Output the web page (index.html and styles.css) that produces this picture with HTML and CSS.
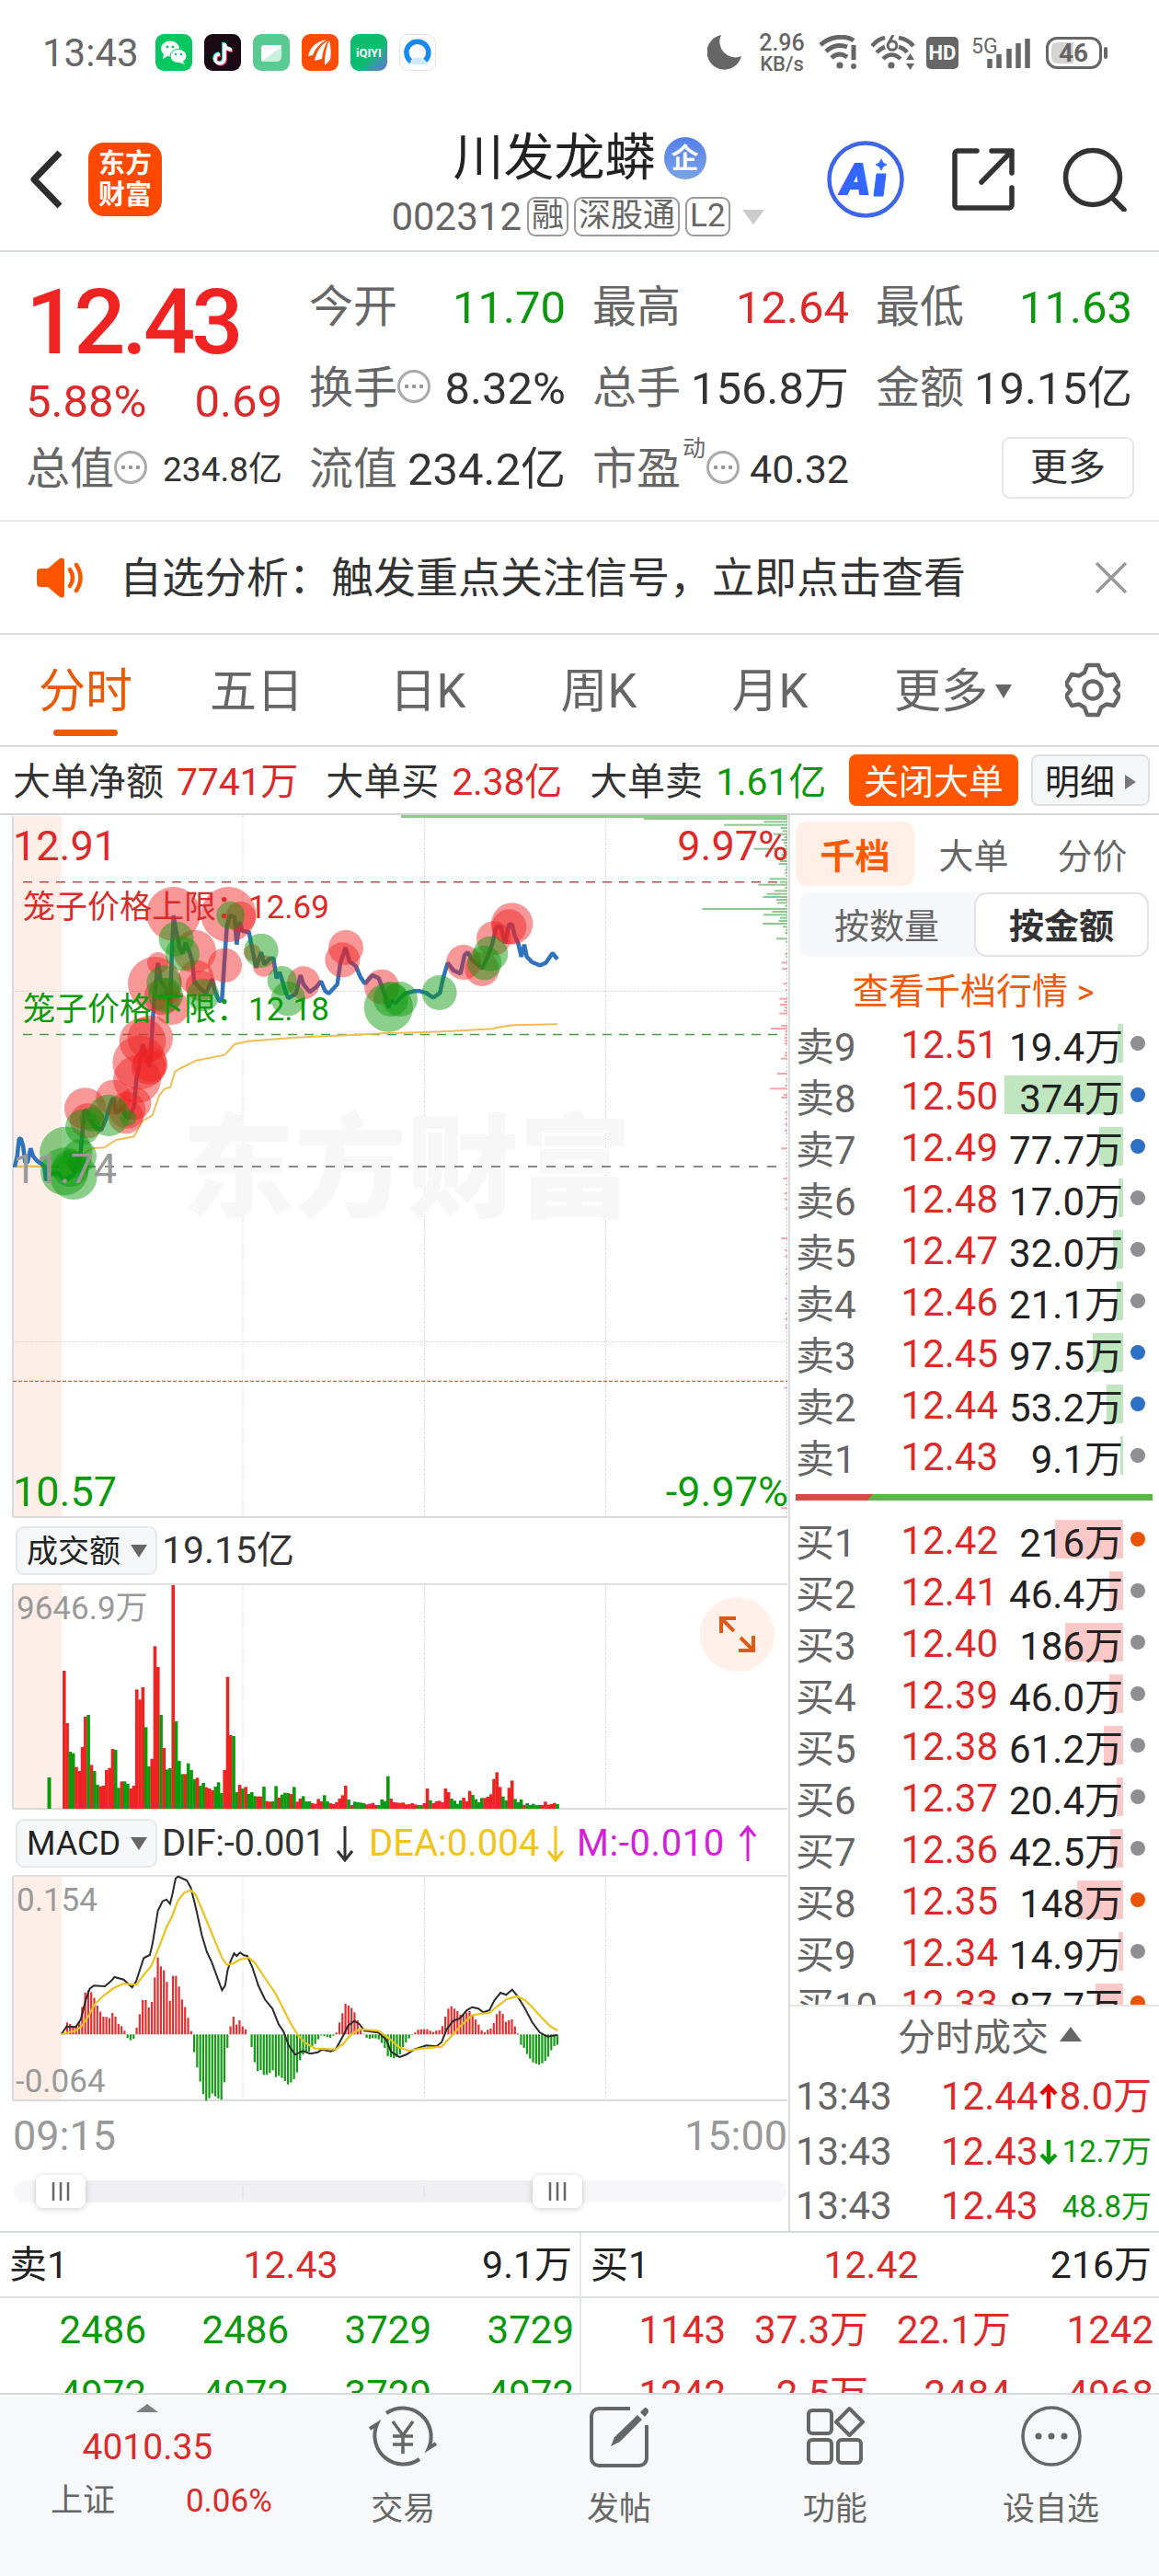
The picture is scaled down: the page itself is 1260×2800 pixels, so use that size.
FILE: index.html
```html
<!DOCTYPE html>
<html lang="zh-CN">
<head>
    <meta charset="UTF-8">
    <title>川发龙蟒 002312</title>
    <link rel="stylesheet" href="styles.css">
</head>
<body>
    <div class="status-bar">
        <span class="clock">13:43</span>
        <div class="app-icons">
            <svg width="40" height="40" viewBox="0 0 40 40"><rect width="40" height="40" rx="9" fill="#07c860"/><ellipse cx="16" cy="16" rx="10" ry="8.500" fill="#fff"/><path d="M9 22l-1 5 5-3z" fill="#fff"/><ellipse cx="25" cy="24" rx="9" ry="7.500" fill="#fff" stroke="#07c860"/><path d="M29 29l3 4-6-2z" fill="#fff"/><g fill="#07c860"><circle cx="13" cy="14" r="1.400"/><circle cx="19" cy="14" r="1.400"/><circle cx="22" cy="22" r="1.200"/><circle cx="28" cy="22" r="1.200"/></g></svg>
            <svg width="40" height="40" viewBox="0 0 40 40"><rect width="40" height="40" rx="9" fill="#1a0a14"/><g fill="none" stroke-width="3.600"><path d="M21 9v17a5 5 0 1 1-5-5M21 10c1 4 4 6 8 6" stroke="#25f4ee"/><path d="M23 11v17a5 5 0 1 1-5-5M23 12c1 4 4 6 8 6" stroke="#fe2c55"/><path d="M22 10v17a5 5 0 1 1-5-5M22 11c1 4 4 6 8 6" stroke="#fff"/></g></svg>
            <svg width="40" height="40" viewBox="0 0 40 40"><rect width="40" height="40" rx="9" fill="#59cb92"/><path d="M13 12h16a2 2 0 0 1 2 2v11a5 5 0 0 1-5 5H11a2 2 0 0 1-2-2V16a4 4 0 0 1 4-4z" fill="#c9f2dd"/><path d="M13 12h16a2 2 0 0 1 2 2L10 29a2 2 0 0 1-1-2V16a4 4 0 0 1 4-4z" fill="#fff"/></svg>
            <svg width="40" height="40" viewBox="0 0 40 40"><rect width="40" height="40" rx="9" fill="#ff4c00"/><path d="M7 24C9 14 16 8 27 6c-8 5-12 10-15 17zM14 29C16 19 21 11 29 7c-5 7-6 13-7 20zM25 34c0-10 1-18 5-27 2 8 2 15 1 21z" fill="#fff"/></svg>
            <svg width="40" height="40" viewBox="0 0 40 40"><defs><linearGradient id="iq" x1="0" y1="0" x2="1" y2="1"><stop offset=".55" stop-color="#0dbd6d"/><stop offset="1" stop-color="#6b6fe0"/></linearGradient></defs><rect width="40" height="40" rx="9" fill="url(#iq)"/><text x="20" y="25" class="iq-text">iQIYI</text></svg>
            <svg width="40" height="40" viewBox="0 0 40 40"><rect x=".5" y=".5" width="39" height="39" rx="9" fill="#fdfdfd" stroke="#e6e6e6"/><path d="M13 30a12 12 0 1 1 15-1" fill="none" stroke="#1689f2" stroke-width="5.500"/><path d="M12 29c4-4 10-5 16-1l3 5H15z" fill="#cdeaff"/></svg>
        </div>
        <svg class="moon" width="38" height="38" viewBox="0 0 38 38"><path d="M15 0A19 19 0 1 0 37 23 17 17 0 0 1 15 0z" fill="#666"/></svg>
        <div class="speed"><span>2.96</span><small>KB/s</small></div>
        <svg class="wifi" width="42" height="38" viewBox="0 0 42 38"><g fill="none" stroke="#666" stroke-width="5"><path d="M1 11C11 1 28 0 37 6"/><path d="M7 18C14 11 23 10 30 13"/><path d="M13 25c5-5 11-5 17-1"/></g><circle cx="22" cy="33" r="3.600" fill="#666"/><path d="M37 11v16" stroke="#666" stroke-width="5"/><circle cx="37" cy="34" r="3" fill="#666"/></svg>
        <svg class="wifi2" width="48" height="38" viewBox="0 0 48 38"><g fill="none" stroke="#666" stroke-width="4.500"><path d="M1 12C5 7 10 4 15 3M30 3c6 1 12 4 16 9"/><path d="M6 19c3-3 6-5 9-6M30 13c4 1 7 3 9 6"/><path d="M13 26c6-6 13-6 19 0"/><path d="M24 0l-5 9" stroke-width="3"/><circle cx="23" cy="11.500" r="4.800" stroke-width="3"/></g><circle cx="22" cy="33" r="3.600" fill="#666"/><path d="M38 27l4.500-7 4.500 7zM38 31l4.500 7 4.500-7z" fill="#666"/></svg>
        <span class="hd">HD</span>
        <div class="signal"><span>5G</span>
            <svg width="48" height="36" viewBox="0 0 48 36"><path d="M3 25v10M13 20v15M24 14v21M34 8v27M44 3v32" stroke="#666" stroke-width="5.500"/></svg>
        </div>
        <div class="battery"><span>46</span></div>
    </div>

    <header class="stock-header">
        <div class="header-left">
            <svg width="36" height="64" viewBox="0 0 36 64"><path d="M33 3L5 32l28 29" fill="none" stroke="#2d2d2d" stroke-width="7" stroke-linejoin="round"/></svg>
            <div class="brand"><span>东方</span><span>财富</span></div>
        </div>
        <div class="stock-title">
            <div class="name"><h1>川发龙蟒</h1><span class="corp">企</span></div>
            <div class="code"><span>002312</span><i>融</i><i>深股通</i><i>L2</i><b class="tri-down"></b></div>
        </div>
        <div class="header-right">
            <svg width="84" height="84" viewBox="0 0 84 84"><circle cx="42" cy="42" r="39.500" fill="none" stroke="#3f66e8" stroke-width="4.500"/><text x="31" y="58" class="ai-text">A</text><path d="M54 36h10l-3 24H51z" fill="#3366ff" stroke="#3366ff" stroke-linejoin="round"/><path d="M59 20q1 5 6 6-5 1-6 6-1-5-6-6 5-1 6-6z" fill="#3366ff" stroke="#3366ff"/></svg>
            <svg width="68" height="68" viewBox="0 0 68 68"><path d="M27 3H6a3 3 0 0 0-3 3v56a3 3 0 0 0 3 3h56a3 3 0 0 0 3-3V43M43 3h22v24M65 3L32 37" fill="none" stroke="#333" stroke-width="5.500" stroke-linecap="round" stroke-linejoin="round"/></svg>
            <svg width="70" height="70" viewBox="0 0 70 70"><circle cx="33" cy="33" r="29.500" fill="none" stroke="#333" stroke-width="5.500"/><path d="M54 55l13 13" stroke="#333" stroke-width="5.500" stroke-linecap="round"/></svg>
        </div>
    </header>

    <section class="quote">
        <div class="price"><strong>12.43</strong><p><span>5.88%</span><span>0.69</span></p></div>
        <div class="cell"><label>今开</label><span class="green">11.70</span></div>
        <div class="cell"><label>最高</label><span class="red">12.64</span></div>
        <div class="cell"><label>最低</label><span class="green">11.63</span></div>
        <div class="cell"><label>换手</label><i class="dots"></i><span>8.32%</span></div>
        <div class="cell"><label>总手</label><span>156.8万</span></div>
        <div class="cell"><label>金额</label><span>19.15亿</span></div>
        <div class="cell"><label>总值</label><i class="dots"></i><span class="small">234.8亿</span></div>
        <div class="cell"><label>流值</label><span>234.2亿</span></div>
        <div class="cell"><label>市盈</label><sup>动</sup><i class="dots"></i><span class="mid">40.32</span></div>
        <div class="cell"><button class="more">更多</button></div>
    </section>

    <section class="notice">
        <svg width="52" height="44" viewBox="0 0 52 44"><path d="M0 16a4 4 0 0 1 4-4h8L25 1q5-2 5 3v36q0 5-5 3L12 32H4a4 4 0 0 1-4-4z" fill="#ff5500"/><path d="M36 13q6 9 0 18M43 8q9 14 0 28" fill="none" stroke="#ff5500" stroke-width="4.500" stroke-linecap="round"/></svg>
        <p>自选分析：触发重点关注信号，立即点击查看</p>
        <svg width="34" height="34" viewBox="0 0 34 34"><path d="M1 1l32 32M33 1L1 33" stroke="#999" stroke-width="3.500"/></svg>
    </section>

    <nav class="tabs">
        <a class="active">分时</a>
        <a>五日</a>
        <a>日K</a>
        <a>周K</a>
        <a>月K</a>
        <a class="tab-more">更多<b></b></a>
        <svg width="60" height="60" viewBox="0 0 60 60"><path d="M24 3h12l3 8 6 3.500 8-1.500 6 10.500-5 6.500 5 6.500L53 47l-8-1.500-6 3.500-3 8H24l-3-8-6-3.500L7 47 1 36.500 6 30l-5-6.500L7 13l8 1.500 6-3.500z" fill="none" stroke="#666" stroke-width="4.500" stroke-linejoin="round"/><circle cx="30" cy="30" r="9.500" fill="none" stroke="#666" stroke-width="4.500"/></svg>
    </nav>

    <section class="big-orders">
        <span>大单净额</span><span class="red">7741万</span>
        <span>大单买</span><span class="red">2.38亿</span>
        <span>大单卖</span><span class="green">1.61亿</span>
        <button class="btn-close">关闭大单</button>
        <button class="btn-detail">明细<b></b></button>
    </section>

    <main class="main">
        <div class="charts">
            <svg id="priceChart" width="857" height="765" viewBox="0 886 857 765"></svg>
            <div class="indicator">
                <span class="picker">成交额<b></b></span><span>19.15亿</span>
            </div>
            <svg id="volumeChart" width="857" height="250" viewBox="0 1720 857 250"></svg>
            <div class="indicator macd">
                <span class="picker">MACD<b></b></span>
                <span class="dif">DIF:-0.001</span><svg width="18" height="40" viewBox="0 0 18 40"><path d="M9 1v37M1 28l8 10 8-10" fill="none" stroke="#333" stroke-width="3"/></svg>
                <span class="dea">DEA:0.004</span><svg width="18" height="40" viewBox="0 0 18 40"><path d="M9 1v37M1 28l8 10 8-10" fill="none" stroke="#f0c419" stroke-width="3"/></svg>
                <span class="m">M:-0.010</span><svg width="18" height="40" viewBox="0 0 18 40"><path d="M9 39V2M1 12L9 2l8 10" fill="none" stroke="#d31fdb" stroke-width="3"/></svg>
            </div>
            <svg id="macdChart" width="857" height="250" viewBox="0 2037 857 250"></svg>
            <div class="times"><span>09:15</span><span>15:00</span></div>
            <div class="slider">
                <svg width="857" height="60" viewBox="0 2352 857 60">
                    <rect x="15" y="2370" width="840" height="24" rx="12" fill="#f7f7f9"/>
                    <rect x="66" y="2370" width="540" height="24" fill="#f0f0f2"/>
                    <path d="M264 2375v14M461 2375v14" stroke="#dcdcde"/>
                    <g fill="#fff" class="handle">
                        <rect x="39" y="2364" width="54" height="36" rx="8"/>
                        <rect x="579" y="2364" width="54" height="36" rx="8"/>
                    </g>
                    <path d="M58 2372v20M66 2372v20M74 2372v20M598 2372v20M606 2372v20M614 2372v20" stroke="#666" stroke-width="2.500"/>
                </svg>
            </div>
        </div>

        <aside class="book">
            <div class="book-tabs"><a class="active">千档</a><a>大单</a><a>分价</a></div>
            <div class="segment"><a>按数量</a><a class="active">按金额</a></div>
            <a class="link">查看千档行情 <small>&gt;</small></a>
            <div class="levels sell">
                <div class="level"><em>卖9</em><b>12.51</b><span>19.4万</span><i style="width: 6px"></i><u></u></div>
                <div class="level"><em>卖8</em><b>12.50</b><span>374万</span><i style="width: 129px"></i><u class="blue"></u></div>
                <div class="level"><em>卖7</em><b>12.49</b><span>77.7万</span><i style="width: 26px"></i><u class="blue"></u></div>
                <div class="level"><em>卖6</em><b>12.48</b><span>17.0万</span><i style="width: 5px"></i><u></u></div>
                <div class="level"><em>卖5</em><b>12.47</b><span>32.0万</span><i style="width: 11px"></i><u></u></div>
                <div class="level"><em>卖4</em><b>12.46</b><span>21.1万</span><i style="width: 7px"></i><u></u></div>
                <div class="level"><em>卖3</em><b>12.45</b><span>97.5万</span><i style="width: 33px"></i><u class="blue"></u></div>
                <div class="level"><em>卖2</em><b>12.44</b><span>53.2万</span><i style="width: 18px"></i><u class="blue"></u></div>
                <div class="level"><em>卖1</em><b>12.43</b><span>9.1万</span><i style="width: 3px"></i><u></u></div>
            </div>
            <div class="ratio"></div>
            <div class="levels buy">
                <div class="level"><em>买1</em><b>12.42</b><span>216万</span><i style="width: 74px"></i><u class="orange"></u></div>
                <div class="level"><em>买2</em><b>12.41</b><span>46.4万</span><i style="width: 15px"></i><u></u></div>
                <div class="level"><em>买3</em><b>12.40</b><span>186万</span><i style="width: 63px"></i><u></u></div>
                <div class="level"><em>买4</em><b>12.39</b><span>46.0万</span><i style="width: 15px"></i><u></u></div>
                <div class="level"><em>买5</em><b>12.38</b><span>61.2万</span><i style="width: 21px"></i><u></u></div>
                <div class="level"><em>买6</em><b>12.37</b><span>20.4万</span><i style="width: 7px"></i><u></u></div>
                <div class="level"><em>买7</em><b>12.36</b><span>42.5万</span><i style="width: 14px"></i><u></u></div>
                <div class="level"><em>买8</em><b>12.35</b><span>148万</span><i style="width: 50px"></i><u class="orange"></u></div>
                <div class="level"><em>买9</em><b>12.34</b><span>14.9万</span><i style="width: 5px"></i><u></u></div>
                <div class="level"><em>买10</em><b>12.33</b><span>87.7万</span><i style="width: 30px"></i><u class="orange"></u></div>
            </div>
            <div class="ticks">
                <h3>分时成交<b></b></h3>
                <div class="tick"><em>13:43</em><span class="red">12.44</span><svg width="20" height="28" viewBox="0 0 20 28"><path d="M10 27V3M2 11l8-8 8 8" fill="none" stroke="#e60000" stroke-width="4.500"/></svg><span class="red amount">8.0万</span></div>
                <div class="tick"><em>13:43</em><span class="red">12.43</span><svg width="20" height="28" viewBox="0 0 20 28"><path d="M10 1v24M2 17l8 8 8-8" fill="none" stroke="#0a9a0a" stroke-width="4.500"/></svg><span class="green amount small">12.7万</span></div>
                <div class="tick"><em>13:43</em><span class="red">12.43</span><span class="green amount small">48.8万</span></div>
            </div>
        </aside>
    </main>

    <section class="queues">
        <div class="queue">
            <div class="queue-head"><span>卖1</span><span class="red">12.43</span><span>9.1万</span></div>
            <div class="queue-list green">
                <span>2486</span><span>2486</span><span>3729</span><span>3729</span>
                <span>4972</span><span>4972</span><span>3729</span><span>4972</span>
            </div>
        </div>
        <div class="queue">
            <div class="queue-head"><span>买1</span><span class="red">12.42</span><span>216万</span></div>
            <div class="queue-list red">
                <span>1143</span><span>37.3万</span><span>22.1万</span><span>1242</span>
                <span>1242</span><span>2.5万</span><span>2484</span><span>4968</span>
            </div>
        </div>
    </section>

    <footer class="bottom-nav">
        <div class="index">
            <b></b>
            <strong>4010.35</strong>
            <p><span>上证</span><span class="red">0.06%</span></p>
        </div>
        <a>
            <svg width="78" height="68" viewBox="0 0 78 68"><g fill="none" stroke="#666" stroke-width="4"><path d="M21 9a31 31 0 0 1 46 38l8-5"/><path d="M57 59A31 31 0 0 1 11 21l-8 5"/><path d="M28 18l11 15 11-15M39 33v20M28 34h22M28 43h22" stroke-width="3.500"/></g></svg>
            交易
        </a>
        <a>
            <svg width="68" height="68" viewBox="0 0 68 68"><path d="M46 4H12a8 8 0 0 0-8 8v46a8 8 0 0 0 8 8h44a8 8 0 0 0 8-8V22" fill="none" stroke="#666" stroke-width="4"/><path d="M25 45l4-10L54 11l5 5-24 24zM57 8l5-5q4 0 4 5l-4 5z" fill="#666"/></svg>
            发帖
        </a>
        <a>
            <svg width="64" height="68" viewBox="0 0 64 68"><g fill="none" stroke="#666" stroke-width="4" stroke-linejoin="round"><rect x="3" y="6" width="25" height="25" rx="4"/><rect x="3" y="38" width="25" height="25" rx="4"/><rect x="35" y="38" width="25" height="25" rx="4"/><path d="M47.500 4L62 18.500 47.500 33 33 18.500z"/></g></svg>
            功能
        </a>
        <a>
            <svg width="68" height="68" viewBox="0 0 68 68"><circle cx="34" cy="34" r="31" fill="none" stroke="#666" stroke-width="3.500"/><g fill="#666"><circle cx="20" cy="34" r="3.500"/><circle cx="34" cy="34" r="3.500"/><circle cx="48" cy="34" r="3.500"/></g></svg>
            设自选
        </a>
    </footer>
    <script src="charts.js"></script>
</body>
</html>
```
FILE: styles.css
```css
* {
    box-sizing: border-box;
}

body {
    margin: 0;
    width: 1260px;
    height: 2800px;
    overflow: hidden;
    background: #fff;
    color: #333;
    font-family: Roboto, "Noto Sans CJK SC", sans-serif;
    font-size: 41px;
    line-height: 1;
}

h1, h3, p {
    margin: 0;
    font-weight: normal;
}

i, em {
    font-style: normal;
}

svg {
    display: block;
    flex: none;
}

span, a, label, em {
    white-space: nowrap;
}

button {
    font-family: inherit;
    padding: 0;
}

.red {
    color: #dc2a2a;
}

.green {
    color: #0c980c;
}

/* status bar */
.status-bar {
    display: flex;
    align-items: center;
    height: 114px;
    padding-left: 46px;
    color: #666;
}

.clock {
    width: 123px;
    padding-top: 2px;
    font-size: 42px;
}

.app-icons {
    display: flex;
    gap: 13px;
}

.iq-text {
    font: bold 13px Roboto, sans-serif;
    fill: #fff;
    text-anchor: middle;
}

.moon {
    margin-left: 295px;
}

.speed {
    display: flex;
    flex-direction: column;
    align-items: center;
    width: 52px;
    margin-left: 17px;
    font-size: 25px;
    font-weight: 500;
}

.speed small {
    font-size: 22px;
}

.wifi {
    margin-left: 15px;
}

.wifi2 {
    margin-left: 14px;
}

.hd {
    width: 35px;
    height: 35px;
    margin-left: 12px;
    border-radius: 5px;
    background: #666;
    color: #fff;
    font-size: 22px;
    font-weight: bold;
    line-height: 36px;
    text-align: center;
}

.signal {
    display: flex;
    align-items: flex-start;
    margin-left: 14px;
    font-size: 23px;
}

.signal svg {
    margin-left: -12px;
}

.battery {
    position: relative;
    width: 61px;
    height: 35px;
    margin-left: 16px;
    border: 3px solid #666;
    border-radius: 12px;
    background: linear-gradient(90deg, #d4d4d4 24px, #fff 24px) content-box;
    padding: 3px;
    font-size: 28px;
    font-weight: bold;
    line-height: 24px;
    text-align: center;
}

.battery::after {
    content: "";
    position: absolute;
    right: -9px;
    top: 8px;
    width: 4px;
    height: 13px;
    border-radius: 2px;
    background: #666;
}

/* header */
.stock-header {
    display: grid;
    grid-template-columns: 1fr auto 1fr;
    height: 160px;
    border-bottom: 2px solid #d5dada;
}

.header-left {
    display: flex;
    align-items: center;
    gap: 28px;
    padding: 4px 0 0 32px;
}

.brand {
    display: flex;
    flex-direction: column;
    justify-content: center;
    gap: 5px;
    width: 80px;
    height: 80px;
    border-radius: 17px;
    background: #ff4800;
    color: #fff;
    font-size: 29px;
    font-weight: bold;
    text-align: center;
}

.stock-title {
    display: flex;
    flex-direction: column;
    align-items: center;
    padding-top: 30px;
}

.name {
    display: flex;
    align-items: center;
    gap: 9px;
}

.name h1 {
    font-size: 55px;
    color: #222;
}

.corp {
    width: 46px;
    height: 46px;
    border-radius: 50%;
    background: linear-gradient(#5580e8, #78a2e8);
    color: #fff;
    font-size: 30px;
    font-weight: bold;
    line-height: 46px;
    text-align: center;
}

.code {
    display: flex;
    align-items: center;
    gap: 6px;
    margin: 15px 4px 0 0;
    color: #666;
    font-size: 42px;
}

.code i {
    height: 43px;
    padding: 0 3px;
    border: 2px solid #999;
    border-radius: 9px;
    font-size: 35px;
    line-height: 38px;
}

.tri-down {
    margin-left: 7px;
    border: 12px solid transparent;
    border-top: 16px solid #ccc;
    border-bottom: 0;
}

.header-right {
    display: flex;
    align-items: center;
    justify-content: flex-end;
    gap: 52px;
    padding: 3px 35px 0 0;
}

.ai-text {
    font: italic 900 47px Roboto, sans-serif;
    fill: #3366ff;
    stroke: #3366ff;
    stroke-width: 2;
    text-anchor: middle;
}

/* quote */
.quote {
    display: grid;
    grid-template-columns: repeat(4, 1fr);
    grid-template-rows: repeat(3, 88px);
    column-gap: 29px;
    height: 293px;
    padding: 16px 29px 0 28px;
    border-bottom: 2px solid #eaeaea;
    font-size: 48px;
}

.price {
    grid-row: span 2;
    padding-top: 11px;
    color: #dc2a2a;
}

.price strong {
    display: block;
    color: #f02323;
    font-size: 99px;
    font-weight: 500;
    letter-spacing: -4px;
}

.price p {
    display: flex;
    justify-content: space-between;
    margin-top: 12px;
    font-size: 49px;
}

.cell {
    display: flex;
    align-items: center;
}

.cell label {
    color: #666;
}

.cell > span {
    margin-left: auto;
    font-size: 49px;
}

.cell .small {
    font-size: 37px;
}

.cell .mid {
    font-size: 43px;
}

.cell sup {
    align-self: flex-start;
    margin: 9px 1px 0 2px;
    color: #666;
    font-size: 25px;
    line-height: 1;
}

.dots {
    width: 36px;
    height: 36px;
    margin-bottom: 4px;
    border: 3px solid #aaa;
    border-radius: 50%;
    background: radial-gradient(circle, #999 2px, transparent 2.600px) center / 8px 30px repeat-x;
    background-clip: content-box;
    padding: 0 3px;
}

.more {
    width: 144px;
    height: 67px;
    margin: 0 -2px 4px auto;
    border: 2px solid #e6e6e6;
    border-radius: 9px;
    background: #fff;
    color: #333;
    font-size: 41px;
    line-height: 56px;
}

/* notice */
.notice {
    display: flex;
    align-items: center;
    height: 123px;
    padding: 0 35px 0 40px;
    border-bottom: 2px solid #dcdcdc;
}

.notice p {
    flex: 1;
    margin-left: 38px;
    font-size: 46px;
}

/* period tabs */
.tabs {
    display: flex;
    align-items: center;
    height: 122px;
    border-bottom: 2px solid #dcdcdc;
    color: #666;
    font-size: 51px;
}

.tabs a {
    position: relative;
    width: 186px;
    padding-top: 3px;
    text-align: center;
}

.tabs .active {
    color: #e65a0a;
}

.tabs .active::after {
    content: "";
    position: absolute;
    left: 58px;
    top: 70px;
    width: 70px;
    height: 7px;
    border-radius: 4px;
    background: #e65a0a;
}

.tabs .tab-more {
    display: flex;
    align-items: center;
    padding-left: 42px;
}

.tab-more b {
    margin-left: 8px;
    border: 9px solid transparent;
    border-top: 15px solid #666;
    border-bottom: 0;
}

.tabs svg {
    margin-left: 42px;
}

/* big orders */
.big-orders {
    display: flex;
    align-items: center;
    height: 74px;
    padding-left: 14px;
    border-bottom: 2px solid #d5d5d5;
}

.big-orders span {
    padding-top: 4px;
}

.big-orders .red, .big-orders .green {
    margin: 0 30px 0 14px;
    letter-spacing: -0.200px;
}

.big-orders button {
    height: 56px;
    border-radius: 8px;
    font-size: 38px;
    line-height: 1;
    padding-top: 3px;
}

.btn-close {
    width: 184px;
    margin-left: -5px;
    border: 0;
    background: #ff5500;
    color: #fff;
}

.btn-detail {
    display: flex;
    align-items: center;
    justify-content: center;
    gap: 11px;
    width: 129px;
    margin-left: 14px;
    border: 2px solid #dfe0e2;
    background: #f6f7f9;
    color: #222;
}

.btn-detail b {
    border: 8px solid transparent;
    border-left: 12px solid #777;
    border-right: 0;
}

/* main area */
.main {
    display: flex;
    height: 1541px;
    border-bottom: 2px solid #d5dada;
}

.charts {
    width: 859px;
    border-right: 2px solid #d9dcdc;
}

.charts text {
    font-size: 45px;
}

.charts .label {
    font-size: 35px;
}

.charts .watermark {
    font-size: 122px;
    font-weight: 900;
    fill: #f7f7f7;
}

.indicator {
    display: flex;
    align-items: center;
    height: 69px;
    padding-left: 17px;
}

.picker {
    display: flex;
    align-items: center;
    justify-content: space-between;
    width: 154px;
    height: 53px;
    margin-right: 5px;
    padding: 0 9px 0 10px;
    border: 2px solid #e6e8eb;
    border-radius: 9px;
    background: #f6f7f9;
    color: #222;
    font-size: 34px;
}

.picker b {
    border: 9px solid transparent;
    border-top: 14px solid #666;
    border-bottom: 0;
}

.macd {
    height: 67px;
    font-size: 40px;
}

.macd .picker {
    font-size: 36px;
}

.macd .dif {
    width: 190px;
    letter-spacing: -0.300px;
}

.macd .dea {
    width: 194px;
    margin-left: 17px;
    color: #f0c419;
}

.macd .m {
    width: 177px;
    margin-left: 14px;
    color: #d31fdb;
    letter-spacing: 0.600px;
}

.times {
    display: flex;
    justify-content: space-between;
    padding: 12px 1px 0 14px;
    color: #999;
    font-size: 45px;
}

.slider {
    margin-top: 8px;
}

.handle {
    filter: drop-shadow(0 1px 3px rgba(0, 0, 0, 0.2));
}

/* order book */
.book {
    width: 401px;
    color: #222;
    font-size: 42px;
}

.book-tabs {
    display: flex;
    margin: 7px 0 0 6px;
}

.book-tabs a {
    width: 129px;
    height: 70px;
    border-radius: 12px;
    color: #666;
    font-size: 38px;
    line-height: 76px;
    text-align: center;
}

.book-tabs .active {
    background: #ffefe7;
    color: #ff5a00;
    font-weight: bold;
}

.segment {
    display: flex;
    width: 380px;
    height: 70px;
    margin: 7px 0 0 10px;
    border-radius: 12px;
    background: #f6f7fa;
    color: #666;
    font-size: 38px;
}

.segment a {
    width: 190px;
    line-height: 74px;
    text-align: center;
}

.segment .active {
    border: 2px solid #e3e3e5;
    border-radius: 14px;
    background: #fff;
    color: #333;
    font-weight: bold;
    line-height: 71px;
}

.link {
    display: block;
    height: 73px;
    padding-left: 68px;
    color: #f05a0a;
    font-size: 39px;
    line-height: 77px;
}

.link small {
    font-size: 36px;
}

.level {
    position: relative;
    display: flex;
    height: 56px;
    padding-left: 6px;
    line-height: 52px;
}

.level em {
    width: 90px;
    color: #666;
}

.level b {
    width: 130px;
    color: #dc2a2a;
    font-weight: normal;
    line-height: 46px;
    text-align: right;
}

.level span {
    z-index: 1;
    width: 136px;
    text-align: right;
}

/* depth bar sits behind the amount */
.level i {
    position: absolute;
    right: 39px;
    top: 0;
    height: 42px;
    background: #bfe6bf;
}

.buy .level i {
    background: #fbc8c8;
}

.level u {
    width: 16px;
    height: 16px;
    margin: 13px 0 0 8px;
    border-radius: 50%;
    background: #8e8e93;
}

.level .blue {
    background: #2d6fc4;
}

.level .orange {
    background: #ea5504;
}

.ratio {
    width: 388px;
    height: 7px;
    margin: 7px 0 21px 6px;
    background: linear-gradient(135deg, #e04848 60px, #5ab946 60px);
}

.buy {
    height: 529px;
    overflow: hidden;
    border-bottom: 2px solid #e6e6e6;
}

.ticks h3 {
    display: flex;
    align-items: center;
    gap: 12px;
    height: 68px;
    padding-left: 117px;
    color: #666;
    font-size: 41px;
}

.ticks h3 b {
    border: 12px solid transparent;
    border-bottom: 16px solid #666;
    border-top: 0;
    margin-bottom: 8px;
}

.tick {
    display: flex;
    align-items: center;
    height: 59.500px;
    padding: 1px 8px 0 6px;
}

.tick em {
    width: 158px;
    color: #666;
}

.tick svg {
    margin-left: 1px;
}

.tick .amount {
    margin-left: auto;
}

.tick .small {
    font-size: 33px;
}

/* queues */
.queues {
    display: grid;
    grid-template-columns: 1fr 1fr;
    height: 174px;
    overflow: hidden;
    font-size: 42px;
}

.queue + .queue {
    border-left: 2px solid #e3e6e6;
}

.queue-head {
    display: grid;
    grid-template-columns: 1fr 1fr 1fr;
    align-items: center;
    height: 71px;
    padding: 2px 8px 0 10px;
    border-bottom: 2px solid #dde0e0;
    color: #222;
    font-size: 41px;
}

.queue-head span:nth-child(2) {
    text-align: center;
}

.queue-head span:nth-child(3) {
    text-align: right;
}

.queue-list {
    display: grid;
    grid-template-columns: repeat(4, 155px);
    grid-auto-rows: 70px;
    align-items: center;
    padding-left: 4px;
    text-align: right;
}

.queue + .queue .queue-list {
    padding-left: 2px;
}

/* bottom nav */
.bottom-nav {
    display: flex;
    height: 199px;
    border-top: 2px solid #d5dada;
    background: #f7f8fa;
    color: #666;
}

.index {
    display: flex;
    flex-direction: column;
    align-items: center;
    width: 321px;
    padding-top: 10px;
}

.index b {
    border: 12px solid transparent;
    border-bottom: 9px solid #808084;
    border-top: 0;
}

.index strong {
    margin-top: 19px;
    color: #dc2a2a;
    font-size: 39px;
    font-weight: normal;
}

.index p {
    display: flex;
    gap: 77px;
    margin-top: 21px;
    padding-left: 30px;
    font-size: 35px;
}

.bottom-nav a {
    display: flex;
    flex-direction: column;
    align-items: center;
    gap: 28px;
    width: 235px;
    padding-top: 11px;
    font-size: 35px;
}
```
FILE: charts.js
```js
const RED = '#f02323';
const GREEN = '#0a9a0a';
const X0 = 14;        // left edge of the plots
const X1 = 856;       // right edge
const OPEN = 67;      // 09:30
const STEP = 3.29;    // one minute

const line = (x1, y1, x2, y2, stroke, dash = '', w = 1) =>
    `<line x1="${x1}" y1="${y1}" x2="${x2}" y2="${y2}" stroke="${stroke}" stroke-width="${w}" stroke-dasharray="${dash}"/>`;
const rect = (x, y, w, h, fill) =>
    `<rect x="${x}" y="${y}" width="${w}" height="${h}" fill="${fill}"/>`;
const text = (x, y, s, fill, cls = '', anchor = 'start') =>
    `<text x="${x}" y="${y}" fill="${fill}" class="${cls}" text-anchor="${anchor}">${s}</text>`;

// "x,y x,y" on a scaled grid -> svg points
function points(str, kx, ky, y0) {
    return str.trim().split(/\s+/).map(p => {
        const [x, y] = p.split(',').map(Number);
        return (x / kx).toFixed(1) + ',' + (y / ky + y0).toFixed(1);
    }).join(' ');
}

function frame(top, bottom) {
    let s = rect(X0, top, OPEN - X0, bottom - top, '#fdeee8');
    [264, 461.5, 658.5].forEach(x => s += line(x, top, x, bottom, '#c8c8c8', '1 1.5'));
    s += line(X0, top, X0, bottom, '#dcdcdc', '', 2);
    s += line(X0, bottom, X1, bottom, '#d9d9d9', '', 2);
    return s;
}

// ---- price ----
const price = `48,1165 56,1130 62,1075 68,1072 76,1100 82,1150 90,1150 100,1105 108,1130 120,1145 135,1155 145,1165
150,1210 160,1190 190,1185 210,1210 225,1200 240,1190 250,1160 262,1130 270,1040 276,980 284,985 292,1010 310,1035
330,1045 345,1010 360,960 370,940 380,990 400,970 410,1000 420,1005 437,970 445,880 455,830 465,765 475,800 486,840
492,800 498,690 505,600 515,500 525,560 540,580 555,630 560,480 566,345 575,400 585,450 595,468 605,435 620,470
628,500 633,560 650,580 672,600 692,552 700,590 715,625 724,620 733,480 740,380 750,345 765,350 772,440 782,365
790,395 812,400 820,440 835,515 852,465 862,505 880,485 892,485 902,550 912,530 930,590 940,615 965,600 980,540
990,570 1010,595 1030,580 1047,560 1060,590 1072,600 1100,570 1110,500 1127,450 1140,495 1160,510 1175,545 1190,568
1215,540 1235,550 1250,590 1267,645 1275,625 1290,630 1320,600 1350,592 1370,592 1390,598 1413,613 1435,598 1445,550
1460,500 1480,525 1502,535 1515,475 1525,465 1540,490 1573,518 1590,480 1605,440 1618,385 1632,380 1648,435 1660,375
1670,375 1680,415 1690,435 1700,480 1710,440 1718,480 1735,497 1760,508 1780,500 1802,468 1818,488`;

const average = `48,1163 150,1163 230,1150 300,1105 340,1102 380,1077 437,1066 465,1015 497,997 520,930 538,910 556,905
570,855 590,843 640,818 733,800 765,765 810,755 960,743 1130,736 1260,729 1360,727 1460,723 1605,715 1630,709
1675,703 1818,700`;

// big order bubbles: x, y, r
const sells = [[752,345,46],[575,422,57],[595,470,56],[535,565,57],[540,605,57],[662,605,53],[852,460,56],[920,558,48],
    [940,617,56],[1267,645,80],[1275,618,57],[1305,618,57],[355,997,68],[270,1035,57],[300,1010,40],[418,1005,27],
    [215,1120,86],[210,1180,78],[240,1195,77],[230,1170,60],[260,1130,55],[1433,597,57],[1580,500,56],[1600,470,57]];
const buys = [[566,340,88],[745,342,90],[785,350,50],[635,462,70],[515,500,35],[505,568,88],[530,610,60],[560,645,57],
    [640,548,57],[655,575,50],[733,508,56],[823,466,28],[860,510,35],[990,565,54],[1128,450,57],[1117,490,57],
    [1245,578,57],[465,755,76],[490,745,74],[455,825,88],[490,830,57],[485,840,57],[447,880,78],[370,938,57],
    [440,958,53],[415,980,60],[278,975,68],[285,1015,57],[410,1000,57],[245,1155,25],[1512,498,57],[1572,520,56],
    [1610,420,56],[1670,372,68],[1660,382,57]];

// volume by price, right side: y, length
const askDepth = [[30,468],[40,77],[50,207],[60,22],[70,15],[80,45],[90,10],[99,20],[108,12],[118,10],[128,110],
    [138,14],[148,20],[158,30],[168,24],[177,28],[187,5],[197,8],[207,8],[216,5],[226,58],[236,24],[245,95],[255,8],
    [265,42],[275,67],[285,80],[294,36],[304,33],[314,8],[324,278],[333,50],[343,78],[353,24],[363,28],[372,80],
    [382,15],[392,6],[402,8],[421,36],[431,6],[470,8],[480,5]];
const bidDepth = [[499,20],[519,17],[568,14],[588,6],[617,26],[627,10],[636,24],[646,10],[656,11],[665,26],[705,20],
    [714,55],[724,8],[734,8],[744,10],[753,8],[763,10],[793,8],[802,10],[812,21],[861,33],[880,6],[900,8],[910,57],
    [930,13],[939,20],[959,5],[988,8],[1008,8],[1027,8],[1047,8],[1056,5],[1105,20],[1154,5],[1164,5],[1203,14],
    [1222,5],[1252,10],[1271,10],[1301,8],[1398,20],[1437,8],[1457,8],[1497,6],[1515,6],[1545,6],[1594,8],[1642,6],
    [1662,8],[1681,6],[1690,6],[1886,10],[2278,20]];

function drawPrice() {
    const Y = 880;
    let s = frame(887, 1649);
    s += text(198, 1313, '东方财富', '#f7f7f7', 'watermark');
    [1077.5, 1458.5].forEach(y => s += line(X0, y, X1, y, '#c8c8c8', '1 1.5'));
    s += line(X1 - 0.5, 887, X1 - 0.5, 1649, '#c8c8c8', '2 2');
    s += rect(436, 886, 420, 3, '#8fca8f');
    askDepth.forEach(([y, w]) => s += rect(X1 - w / 3, Y + y / 3 - 1, w / 3, 2, '#8fc68f'));
    bidDepth.forEach(([y, w]) => s += rect(X1 - w / 3, Y + y / 3 - 1, w / 3, 2, '#f0a5a8'));
    s += line(25, 958.7, 847, 958.7, '#b55050', '10 8', 1.5);
    s += line(25, 1124.5, 847, 1124.5, '#44a044', '10 8', 1.5);
    s += line(X0, 1268, 847, 1268, '#888', '10 10', 2);
    s += line(X0, 1501.3, X1, 1501.3, '#c0703c', '4 2', 1.2);
    s += `<polyline points="${points(average, 3, 3, Y)}" fill="none" stroke="#efbd56" stroke-width="2"/>`;
    s += `<polyline points="${points(price, 3, 3, Y)}" fill="none" stroke="#2f73bd" stroke-width="4.5" stroke-linejoin="bevel"/>`;
    buys.forEach(([x, y, r]) => s += `<circle cx="${x / 3}" cy="${Y + y / 3}" r="${r / 3}" fill="${RED}" fill-opacity=".47"/>`);
    sells.forEach(([x, y, r]) => s += `<circle cx="${x / 3}" cy="${Y + y / 3}" r="${r / 3}" fill="${GREEN}" fill-opacity=".47"/>`);
    s += text(25, 998, '笼子价格上限：12.69', '#dc2a2a', 'label');
    s += text(25, 1108.5, '笼子价格下限：12.18', GREEN, 'label');
    s += text(14, 934.5, '12.91', '#dc2a2a');
    s += text(857, 934.5, '9.97%', '#dc2a2a', '', 'end');
    s += text(14, 1286, '11.74', '#999');
    s += text(14, 1636.5, '10.57', GREEN);
    s += text(857, 1636.5, '-9.97%', GREEN, '', 'end');
    document.getElementById('priceChart').innerHTML = s;
}

// ---- volume, bar tops per minute, base at 978 ----
const volume = [528,699,792,797,842,855,777,678,672,835,855,900,905,903,852,845,783,786,910,889,889,897,912,903,589,622,
    582,712,840,815,448,516,672,780,850,846,249,693,822,865,865,830,852,882,877,903,894,908,912,918,906,892,927,852,548,
    738,741,924,900,912,907,930,924,937,938,938,906,953,955,954,904,942,932,926,927,930,907,955,945,937,954,954,960,962,
    946,954,934,954,960,963,957,945,934,903,948,966,955,957,958,960,964,962,959,966,966,948,953,872,945,957,958,959,958,
    964,963,960,964,966,966,960,912,951,960,954,952,957,912,924,945,952,962,951,942,954,920,933,947,957,943,943,939,931,
    881,859,907,938,951,910,886,946,957,948,965,960,966,962,966,966,966,955,965,963,959,963];
const volumeUp = 'RRGGRRRRGRGGRRRRRGGRGGRRRRRGGRRRGRGGRGGGRGGGRGGRRRGGGRRRGGRGRGGGRRGRRGGRGGGRGRRGGGRRRRGGRRRRRRGRGGGGRRRRGGGGRRRRRRRRRGGRRGRRRRRRGGGGRRRGGGGRRRRRRGGRRGGGRGGGGGRRRRRG';

function drawVolume() {
    const base = 1966;
    let s = frame(1722, base) + line(X0, 1722, X1, 1722, '#e0e0e0', '', 2);
    s += rect(51.5, base - 34, 4, 34, GREEN);
    volume.forEach((t, i) => {
        const h = (978 - t) / 3;
        s += rect(OPEN + 1 + i * STEP, base - h, 3.6, h, volumeUp[i] === 'R' ? RED : GREEN);
    });
    s += text(18, 1760, '9646.9万', '#999', 'label');
    s += '<circle cx="801.5" cy="1776.5" r="40.5" fill="#fff0e9"/>';
    s += '<path d="M784 1775v-16h16M784 1759l14 14M819 1778v16h-16M819 1794l-14-14" fill="none" stroke="#dc5a14" stroke-width="4"/>';
    document.getElementById('volumeChart').innerHTML = s;
}

// ---- macd, zero at 724 ----
const hist = [720,685,690,700,697,685,635,587,580,586,605,630,650,666,667,671,654,666,690,697,712,736,743,738,702,658,612,
    612,636,618,538,473,502,515,553,615,533,533,568,610,635,670,713,782,832,878,919,940,932,917,926,933,937,880,768,698,
    666,692,678,698,708,724,765,815,844,840,856,856,850,841,863,859,866,876,887,881,870,848,808,790,780,780,762,755,740,
    727,730,733,735,728,718,685,655,624,630,638,652,678,706,722,735,738,736,737,740,752,768,795,798,802,798,789,765,750,
    737,726,718,709,707,707,707,712,716,712,710,697,666,640,632,640,648,660,658,653,648,660,675,692,711,717,709,705,687,
    658,647,657,683,678,675,698,721,758,768,788,803,815,819,823,818,810,797,776,762,758];
const dif = `122,722 132,698 150,700 160,675 170,610 178,575 186,565 208,567 220,550 227,537 245,545 262,571 270,550
285,475 297,465 302,430 308,370 313,320 322,290 330,284 337,298 342,265 348,215 353,209 362,216 370,221 378,245
388,310 400,400 410,455 420,490 430,535 440,580 446,565 451,515 457,485 464,460 469,468 476,457 483,466 490,468
500,505 512,565 525,610 540,640 552,690 562,715 572,760 585,790 600,778 615,787 630,782 638,773 655,779 665,773
678,735 690,695 702,680 712,690 722,712 750,718 765,740 775,780 792,798 805,790 822,772 845,760 865,763 875,750
885,708 898,680 912,671 925,645 936,635 948,640 958,652 970,645 980,612 992,588 1003,595 1015,578 1025,598
1040,638 1055,685 1070,718 1085,731 1104,726`;
const dea = `122,724 135,718 150,712 160,700 175,665 188,625 205,598 225,573 245,558 270,562 285,530 300,500 315,440
330,375 342,335 352,290 365,262 378,254 388,268 405,335 425,415 440,475 450,497 462,493 475,480 493,474 505,490
525,540 545,588 560,635 575,685 590,725 605,752 625,770 665,773 680,755 695,725 712,707 750,712 770,735 790,765
810,777 835,770 875,764 890,738 905,710 920,685 935,662 950,657 970,654 985,633 1005,608 1025,600 1040,612
1055,635 1075,672 1090,697 1105,711`;

function drawMacd() {
    const zero = 2211.3;
    let s = frame(2039, 2283) + line(X0, 2039, X1, 2039, '#e0e0e0', '', 2);
    hist.forEach((t, i) => {
        const h = Math.abs(724 - t) / 3;
        s += rect(OPEN + 1.5 + i * STEP, t < 724 ? zero - h : zero, 2.2, h, t < 724 ? '#e03030' : '#149a14');
    });
    s += text(18, 2077, '0.154', '#999', 'label');
    s += text(17, 2274, '-0.064', '#999', 'label');
    s += `<polyline points="${points(dif, 1.823, 3, 1970)}" fill="none" stroke="#2b2b2b" stroke-width="2"/>`;
    s += `<polyline points="${points(dea, 1.823, 3, 1970)}" fill="none" stroke="#ecc21c" stroke-width="2.2"/>`;
    document.getElementById('macdChart').innerHTML = s;
}

drawPrice();
drawVolume();
drawMacd();
```
